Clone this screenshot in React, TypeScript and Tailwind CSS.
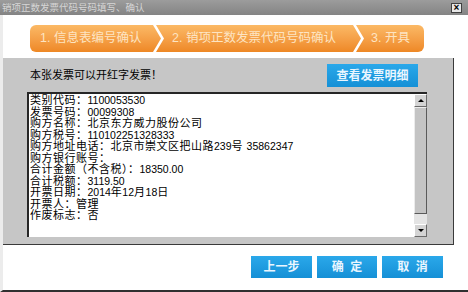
import React from "react";

const N = ({ children }: { children: React.ReactNode }) => (
  <span className="text-[10.5px] tracking-normal">{children}</span>
);

const lines: React.ReactNode[] = [
  <>类别代码：<N>1100053530</N></>,
  <>发票号码：<N>00099308</N></>,
  <>购方名称：北京东方威力股份公司</>,
  <>购方税号：<N>110102251328333</N></>,
  <>购方地址电话：北京市崇文区把山路<N>239</N>号 <N>35862347</N></>,
  <>购方银行账号：</>,
  <>合计金额（不含税）：<N>18350.00</N></>,
  <>合计税额：<N>3119.50</N></>,
  <>开票日期：<N>2014</N>年<N>12</N>月<N>18</N>日</>,
  <>开票人：管理</>,
  <>作废标志：否</>,
];

function BlueBtn({ w, children }: { w: string; children: React.ReactNode }) {
  return (
    <div
      className={`${w} h-[22px] flex items-center justify-center bg-gradient-to-b from-[#2aa8ea] to-[#1590d6] text-[#eaf6ff] text-[12px] font-bold`}
    >
      {children}
    </div>
  );
}

export default function App() {
  return (
    <div
      className="w-[468px] h-[292px] bg-white flex flex-col overflow-hidden"
      style={{ fontFamily: '"Liberation Sans", "Noto Sans CJK SC", sans-serif' }}
    >
      {/* title bar */}
      <div className="h-[15px] shrink-0 bg-gradient-to-b from-[#9c9c9c] to-[#848484] flex items-center justify-between pl-[2px] pr-[6px]">
        <span className="text-[9.5px] leading-none text-[#d6d6d6]">销项正数发票代码号码填写、确认</span>
        <div className="w-[11px] h-[10px] bg-[#e8e8e8] border border-[#404040] flex items-center justify-center text-[10px] leading-none font-bold text-black">
          ×
        </div>
      </div>

      <div className="flex-1 flex flex-col border-l-[3px] border-[#ececec] border-b-[2px] border-b-[#303030]">
        {/* steps */}
        <div className="flex mt-[10px] pl-[27px] h-[27px] shrink-0">
          <div className="w-[131px] h-full rounded-l-[6px] bg-gradient-to-b from-[#fbb965] to-[#ee8824] [clip-path:polygon(0_0,calc(100%-8px)_0,100%_50%,calc(100%-8px)_100%,0_100%)] flex items-center pl-[10px] text-[12.5px] text-[#fde4c2]">
            1. 信息表编号确认
          </div>
          <div className="w-[205px] -ml-[5px] h-full bg-gradient-to-b from-[#fbb965] to-[#ee8824] [clip-path:polygon(0_0,calc(100%-8px)_0,100%_50%,calc(100%-8px)_100%,0_100%,8px_50%)] flex items-center pl-[16px] text-[12.5px] text-[#fde4c2]">
            2. 销项正数发票代码号码确认
          </div>
          <div className="w-[68px] -ml-[5px] h-full rounded-r-[6px] bg-gradient-to-b from-[#fbb965] to-[#ee8824] [clip-path:polygon(0_0,100%_0,100%_100%,0_100%,8px_50%)] flex items-center pl-[15px] text-[12.5px] text-[#fde4c2]">
            3. 开具
          </div>
        </div>

        {/* gray panel */}
        <div className="mt-[6px] w-[451px] h-[187px] bg-[#c6c6c6] border-r border-b border-[#3a3a3a] flex flex-col pl-[24px] pr-[26px] pt-[6px]">
          <div className="flex items-center justify-between h-[23px]">
            <span className="text-[11px] text-black pl-[3px]">本张发票可以开红字发票！</span>
            <div className="w-[91px] h-[23px] mr-[9px] flex items-center justify-center bg-gradient-to-b from-[#2aa8ea] to-[#1590d6] text-[#eaf6ff] text-[12px] font-bold">
              查看发票明细
            </div>
          </div>
          <div className="mt-[5px] h-[145px] flex bg-white border-l-2 border-t-2 border-[#262626]">
            <div className="flex-1 pl-[1px] pt-[1px] text-[11px] tracking-[0.5px] leading-[11.5px] text-black">
              {lines.map((l, i) => (
                <div key={i} className="whitespace-nowrap h-[11.5px]">{l}</div>
              ))}
            </div>
            <div className="w-[13px] flex flex-col bg-[#dedede]">
              <div className="h-[13px] bg-[#d4d4d4] border-t border-l border-white border-r border-b border-r-[#6a6a6a] border-b-[#6a6a6a] flex items-center justify-center">
                <div className="w-0 h-0 border-l-[3px] border-r-[3px] border-b-[3px] border-l-transparent border-r-transparent border-b-black" />
              </div>
              <div className="flex-1 bg-[#c4c4c4] border-t border-l border-[#ececec] border-r border-b border-r-[#5a5a5a] border-b-[#5a5a5a]" />
              <div className="h-[10px] bg-[#e4e4e4]" />
              <div className="h-[13px] bg-[#d4d4d4] border-t border-l border-white border-r border-b border-r-[#6a6a6a] border-b-[#6a6a6a] flex items-center justify-center">
                <div className="w-0 h-0 border-l-[3px] border-r-[3px] border-t-[3px] border-l-transparent border-r-transparent border-t-black" />
              </div>
            </div>
          </div>
        </div>

        {/* bottom buttons */}
        <div className="mt-[11px] flex justify-end gap-[5px] pr-[25px]">
          <BlueBtn w="w-[61px]">上一步</BlueBtn>
          <BlueBtn w="w-[60px]">确&nbsp;&nbsp;定</BlueBtn>
          <BlueBtn w="w-[61px]">取&nbsp;&nbsp;消</BlueBtn>
        </div>
      </div>
    </div>
  );
}
